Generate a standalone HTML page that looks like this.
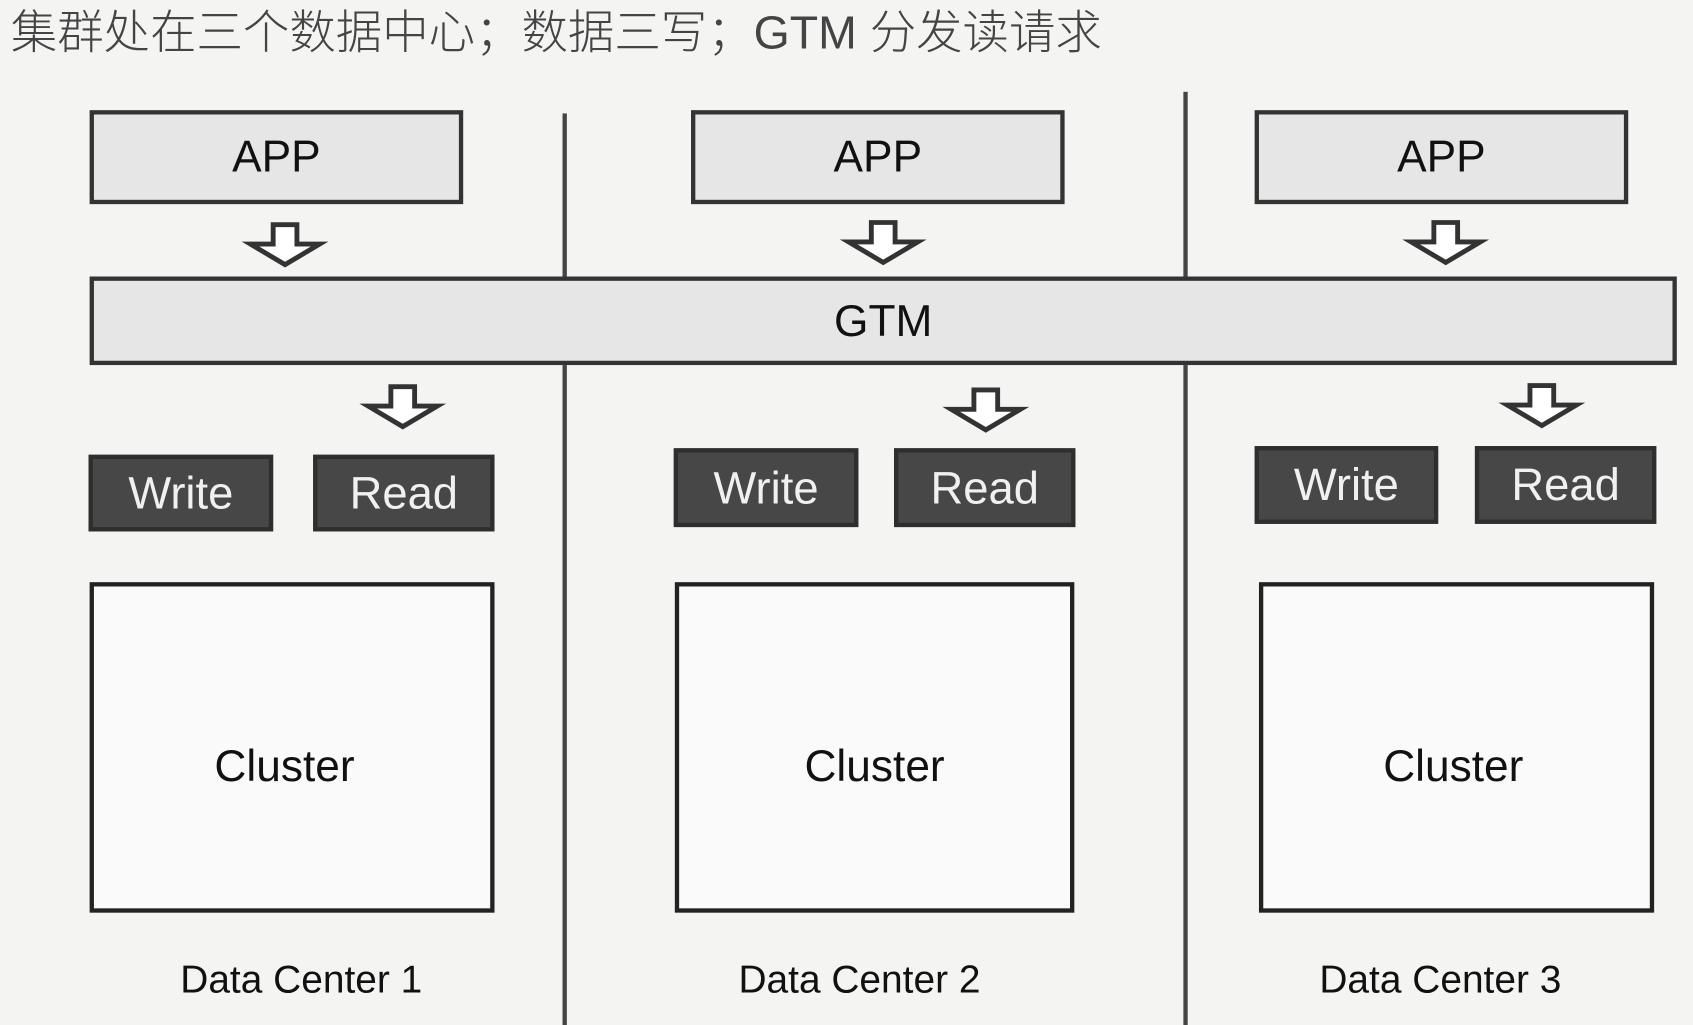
<!DOCTYPE html>
<html><head><meta charset="utf-8">
<style>
html,body{margin:0;padding:0;background:#f4f4f3;overflow:hidden;}
#w{position:absolute;left:0;top:0;width:1568px;height:949px;transform:scale(1.07972,1.08009);transform-origin:0 0;font-family:"Liberation Sans",Arial,sans-serif;}
.a{position:absolute;box-sizing:border-box;}
.app{background:#e6e6e6;border:4px solid #333;font-size:41px;color:#111;display:flex;align-items:center;justify-content:center;}
.wr{background:#474747;border:4px solid #2e2e2e;font-size:42px;color:#f0f0f0;display:flex;align-items:center;justify-content:center;}
.cl{background:#fafafa;border:4px solid #222;font-size:41px;color:#111;display:flex;align-items:center;justify-content:center;padding-top:34px;}
.lab{font-size:36px;color:#111;width:300px;text-align:center;}
.v{background:#444;width:4px;}
</style></head><body><div id="w">
<div class="a" style="left:10px;top:-4px;font-size:43px;color:#444;font-family:'Liberation Sans','Noto Sans CJK SC',sans-serif;font-weight:300;white-space:nowrap;">集群处在三个数据中心；数据三写；GTM 分发读请求</div>
<div class="a v" style="left:521px;top:105px;height:844px"></div>
<div class="a v" style="left:1096px;top:85px;height:864px"></div>
<div class="a app" style="left:83px;top:102px;width:346px;height:87px">APP</div>
<div class="a app" style="left:640px;top:102px;width:346px;height:87px">APP</div>
<div class="a app" style="left:1162px;top:102px;width:346px;height:87px">APP</div>
<div class="a app" style="left:83px;top:256px;width:1470px;height:82px">GTM</div>
<svg class="a" style="left:0;top:0" width="1568" height="949">
<defs><path id="ar" d="M-11,0 H11 V18 H32 L0,37 L-32,18 H-11 Z" fill="#fff" stroke="#333" stroke-width="4.5" stroke-linejoin="miter"/></defs>
<use href="#ar" x="264" y="208"/>
<use href="#ar" x="818" y="206"/>
<use href="#ar" x="1339" y="206"/>
<use href="#ar" x="373" y="358"/>
<use href="#ar" x="913" y="361"/>
<use href="#ar" x="1428" y="357"/>
</svg>
<div class="a wr" style="left:82px;top:421px;width:171px;height:71px">Write</div>
<div class="a wr" style="left:290px;top:421px;width:168px;height:71px">Read</div>
<div class="a wr" style="left:624px;top:415px;width:171px;height:73px">Write</div>
<div class="a wr" style="left:828px;top:415px;width:168px;height:73px">Read</div>
<div class="a wr" style="left:1162px;top:413px;width:170px;height:72px">Write</div>
<div class="a wr" style="left:1366px;top:413px;width:168px;height:72px">Read</div>
<div class="a cl" style="left:83px;top:539px;width:375px;height:306px;padding-right:14px">Cluster</div>
<div class="a cl" style="left:625px;top:539px;width:370px;height:306px">Cluster</div>
<div class="a cl" style="left:1166px;top:539px;width:366px;height:306px;padding-right:6px">Cluster</div>
<div class="a lab" style="left:129px;top:886px">Data Center 1</div>
<div class="a lab" style="left:646px;top:886px">Data Center 2</div>
<div class="a lab" style="left:1184px;top:886px">Data Center 3</div>
</div></body></html>
